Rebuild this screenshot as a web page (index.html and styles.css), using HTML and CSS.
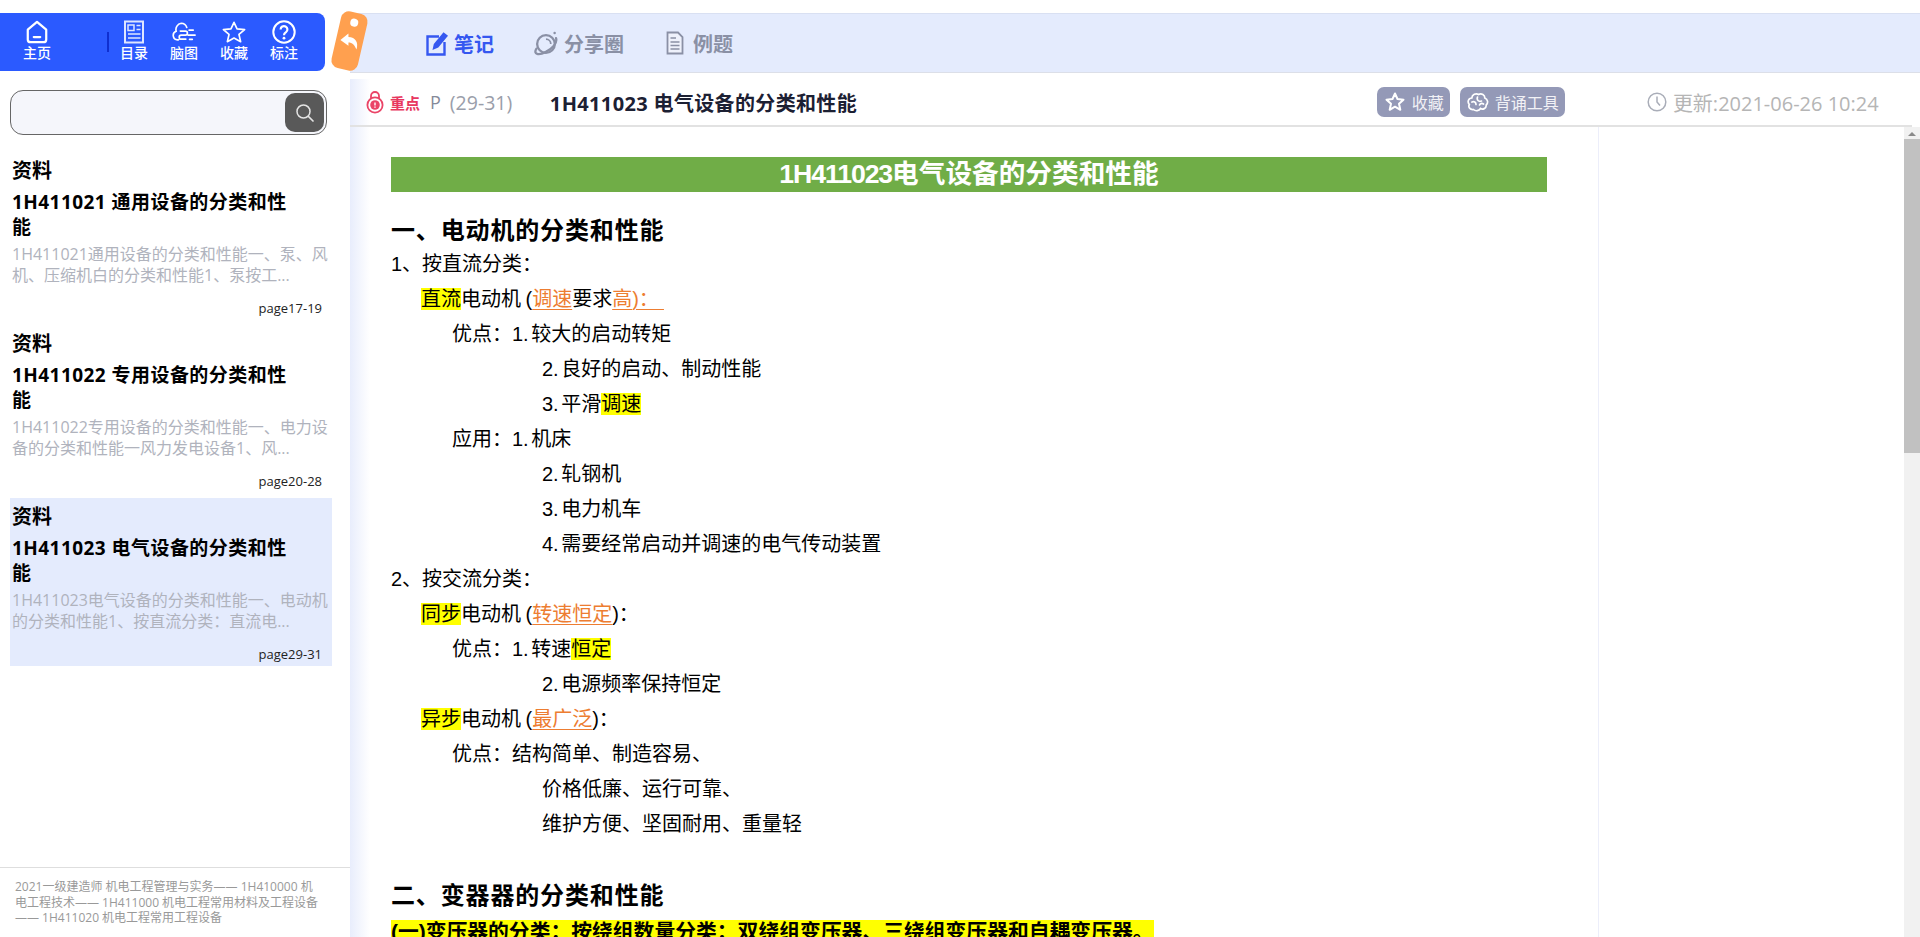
FILE: index.html
```html
<!DOCTYPE html>
<html lang="zh-CN">
<head>
<meta charset="utf-8">
<title>1H411023 电气设备的分类和性能</title>
<link rel="stylesheet" href="styles.css">
</head>
<body>
<div class="app">
  <aside class="side">
    <nav class="nav">
      <a class="nav-item nav-home">
        <svg viewBox="0 0 24 26" class="nav-icon"><path d="M12 2 L22 10.500 V21 a3 3 0 0 1-3 3 H5 a3 3 0 0 1-3-3 V10.500 Z M8.500 18.500 H15.500" fill="none" stroke="#fff" stroke-width="2.400" stroke-linejoin="round" stroke-linecap="round"/></svg>
        <span>主页</span>
      </a>
      <span class="nav-sep"></span>
      <a class="nav-item">
        <svg viewBox="0 0 22 24" class="nav-icon"><path d="M2 1.500 H20 V22.500 H2 Z" fill="none" stroke="#dfe6ff" stroke-width="2"/><path d="M5 5 H11 V10.500 H5 Z" fill="none" stroke="#dfe6ff" stroke-width="1.500"/><path d="M13.500 5.500 H17.500 M13.500 9.500 H17.500 M5 14 H17.500 M5 18 H17.500" stroke="#dfe6ff" stroke-width="1.600"/></svg>
        <span>目录</span>
      </a>
      <a class="nav-item">
        <svg viewBox="0 0 26 24" class="nav-icon"><path d="M7 20.500 H6 a4.800 4.800 0 0 1-1.500-9.300 A7 7 0 0 1 10 2.500 a6.500 6.500 0 0 1 6 4.500 M9 11 H14.500 a2.200 2.200 0 0 1 0 4.400 H10 a2.200 2.200 0 0 0 0 4.400 H15 M18.500 10 H23 M17.500 15.400 H25 M19 20 H22" fill="none" stroke="#fff" stroke-width="1.800" stroke-linecap="round"/></svg>
        <span>脑图</span>
      </a>
      <a class="nav-item">
        <svg viewBox="0 0 26 24" class="nav-icon"><path d="M13 1.500 L16.300 8.600 L24.500 9.400 L18.400 14.700 L20.200 22.500 L13 18.500 L5.800 22.500 L7.600 14.700 L1.500 9.400 L9.700 8.600 Z" fill="none" stroke="#fff" stroke-width="1.800" stroke-linejoin="round"/></svg>
        <span>收藏</span>
      </a>
      <a class="nav-item">
        <svg viewBox="0 0 24 24" class="nav-icon"><circle cx="12" cy="12" r="10.700" fill="none" stroke="#fff" stroke-width="2"/><path d="M8.600 9.400 a3.400 3.400 0 1 1 5.400 2.800 c-1.300 .9-2 1.500-2 3" fill="none" stroke="#fff" stroke-width="2.200"/><circle cx="12" cy="18.200" r="1.400" fill="#fff"/></svg>
        <span>标注</span>
      </a>
    </nav>
    <div class="tag">
      <span class="tag-hole"></span>
      <svg viewBox="0 0 20 18" class="tag-arrow"><path d="M9 0.500 L0.500 7.500 L9 13.500 V10 C13 10 15.500 12.500 17.500 17.500 C20 10 16.500 4.500 9 4.300 Z" fill="#fff"/></svg>
    </div>
    <div class="search">
      <span class="search-btn">
        <svg viewBox="0 0 20 20" class="search-icon"><circle cx="8.500" cy="8.500" r="6.500" fill="none" stroke="#e4e4e4" stroke-width="1.500"/><path d="M13.500 13.500 L18 18" stroke="#e4e4e4" stroke-width="1.700" stroke-linecap="round"/></svg>
      </span>
    </div>
    <ul class="list">
      <li class="entry">
        <div class="entry-kind">资料</div>
        <div class="entry-title">1H411021 通用设备的分类和性能</div>
        <div class="entry-desc">1H411021通用设备的分类和性能一、泵、风机、压缩机白的分类和性能1、泵按工...</div>
        <div class="entry-page">page17-19</div>
      </li>
      <li class="entry">
        <div class="entry-kind">资料</div>
        <div class="entry-title">1H411022 专用设备的分类和性能</div>
        <div class="entry-desc">1H411022专用设备的分类和性能一、电力设备的分类和性能一风力发电设备1、风...</div>
        <div class="entry-page">page20-28</div>
      </li>
      <li class="entry entry-on">
        <div class="entry-kind">资料</div>
        <div class="entry-title">1H411023 电气设备的分类和性能</div>
        <div class="entry-desc">1H411023电气设备的分类和性能一、电动机的分类和性能1、按直流分类：直流电...</div>
        <div class="entry-page">page29-31</div>
      </li>
    </ul>
    <footer class="crumb">2021一级建造师 机电工程管理与实务—— 1H410000 机电工程技术—— 1H411000 机电工程常用材料及工程设备—— 1H411020 机电工程常用工程设备</footer>
  </aside>

  <main class="main">
    <div class="tabs">
      <a class="tab tab-on">
        <svg viewBox="0 0 22 25" class="tab-icon tab-icon-note"><path d="M13 5.500 H1.500 V23.500 H18.500 V11" fill="none" stroke="#3557f0" stroke-width="2.400"/><path d="M6.500 19 L7.800 13 L17.500 1.200 L22 4.800 L12.300 16.500 Z" fill="#3557f0"/></svg>
        <span>笔记</span>
      </a>
      <a class="tab tab-share">
        <svg viewBox="0 0 26 26" class="tab-icon tab-icon-share"><circle cx="13.500" cy="13.500" r="9.200" fill="none" stroke="#8a90a5" stroke-width="2.400"/><path d="M13.500 8.500 a5 5 0 0 1 5 5" fill="none" stroke="#8a90a5" stroke-width="1.800"/><path d="M3.500 18.500 C0 24.500 6 25.500 13 22 C19.500 19 25.500 13 24 7.500" fill="none" stroke="#8a90a5" stroke-width="2.400" stroke-linecap="round"/><circle cx="22.500" cy="2" r="1.300" fill="#8a90a5"/></svg>
        <span>分享圈</span>
      </a>
      <a class="tab">
        <svg viewBox="0 0 18 24" class="tab-icon tab-icon-doc"><path d="M1.500 1.500 H12 L16.500 6 V22.500 H1.500 Z" fill="#eef1fb" stroke="#8a90a5" stroke-width="1.800"/><path d="M4.500 7 H10 M4.500 11 H13.500 M4.500 14.500 H13.500 M4.500 18 H13.500" stroke="#8a90a5" stroke-width="1.400"/></svg>
        <span>例题</span>
      </a>
    </div>
    <header class="head">
      <svg viewBox="0 0 18 24" class="head-lock"><path d="M5 9 V6 a4 4 0 0 1 8 0 V9" fill="none" stroke="#ea4467" stroke-width="1.800"/><circle cx="9" cy="15" r="7.600" fill="none" stroke="#ea4467" stroke-width="1.800"/><circle cx="9" cy="15" r="4.800" fill="#ea4467"/><path d="M9 12.500 V15.500 M9 16.600 V17.800" stroke="#fff" stroke-width="1.400"/></svg>
      <span class="head-key">重点</span>
      <span class="head-page">P</span>
      <span class="head-range">(29-31)</span>
      <span class="head-title">1H411023 电气设备的分类和性能</span>
      <a class="pill">
        <svg viewBox="0 0 20 20" class="pill-icon"><path d="M10 1.500 L12.500 7 L18.500 7.700 L14 11.700 L15.300 17.800 L10 14.700 L4.700 17.800 L6 11.700 L1.500 7.700 L7.500 7 Z" fill="none" stroke="#fff" stroke-width="2" stroke-linejoin="round"/></svg>
        <span>收藏</span>
      </a>
      <a class="pill">
        <svg viewBox="0 0 22 20" class="pill-icon"><path d="M6.500 17.500 C3 18 1 15 2.300 12.500 C0 10 1.500 6 4.800 6 C5 2.500 9 0.800 11.500 2.500 C14.500 0.800 18 3 17.800 6 C20.800 7 21.500 11 19.200 13 C19.500 16.500 15.500 18 13.500 16.500 C12 19 8.500 19.500 6.500 17.500 Z M5 10 C7 9 9 10 9 12.500 M10.500 5 C9.500 8 11.500 10 14.500 9 M12.500 13 C13 11.500 15 11 16.500 12" fill="none" stroke="#fff" stroke-width="1.700" stroke-linecap="round"/></svg>
        <span>背诵工具</span>
      </a>
      <span class="head-time">
        <svg viewBox="0 0 20 20" class="time-icon"><circle cx="10" cy="10" r="8.800" fill="none" stroke="#a9adb8" stroke-width="1.500"/><path d="M10 4.500 V10 L13 13.500" fill="none" stroke="#a9adb8" stroke-width="1.500"/></svg>
        <span>更新:2021-06-26 10:24</span>
      </span>
    </header>
    <div class="body">
      <article class="doc">
        <h1 class="doc-banner"><span class="banner-code">1H411023</span>电气设备的分类和性能</h1>
        <h2 class="doc-h2">一、电动机的分类和性能</h2>
        <p class="line">1、按直流分类：</p>
        <p class="line ind1"><mark>直流</mark>电动机<span class="par">(</span><u class="org">调速</u>要求<u class="org">高)：&nbsp;&nbsp;</u></p>
        <p class="line ind2">优点：1. 较大的启动转矩</p>
        <p class="line ind3">2. 良好的启动、制动性能</p>
        <p class="line ind3">3. 平滑<mark>调速</mark></p>
        <p class="line ind2">应用：1. 机床</p>
        <p class="line ind3">2. 轧钢机</p>
        <p class="line ind3">3. 电力机车</p>
        <p class="line ind3">4. 需要经常启动并调速的电气传动装置</p>
        <p class="line">2、按交流分类：</p>
        <p class="line ind1"><mark>同步</mark>电动机<span class="par">(</span><u class="org">转速恒定</u>)：</p>
        <p class="line ind2">优点：1. 转速<mark>恒定</mark></p>
        <p class="line ind3">2. 电源频率保持恒定</p>
        <p class="line ind1"><mark>异步</mark>电动机<span class="par">(</span><u class="org">最广泛</u>)：</p>
        <p class="line ind2">优点：结构简单、制造容易、</p>
        <p class="line ind3">价格低廉、运行可靠、</p>
        <p class="line ind3">维护方便、坚固耐用、重量轻</p>
        <h2 class="doc-h2 doc-h2-b">二、变器器的分类和性能</h2>
        <p class="line line-b"><mark>(一)变压器的分类：按绕组数量分类：双绕组变压器、三绕组变压器和自耦变压器。</mark></p>
      </article>
      <div class="margin"></div>
      <div class="scroll">
        <span class="scroll-up"></span>
        <span class="scroll-thumb"></span>
      </div>
    </div>
  </main>
</div>
</body>
</html>
```
FILE: styles.css
```css
* { box-sizing: border-box; }
html, body { margin: 0; padding: 0; height: 100%; overflow: hidden; background: #fff; }
body { font-family: "Open Sans", "Noto Sans CJK SC", sans-serif; color: #000; }
a { color: inherit; text-decoration: none; }
ul { list-style: none; margin: 0; padding: 0; }
p, h1, h2 { margin: 0; }

.app { display: flex; height: 937px; }

/* Sidebar */
.side { position: relative; flex: 0 0 350px; width: 350px; padding-top: 13px; display: flex; flex-direction: column; }
.nav { width: 325px; height: 58px; background: #2b5aff; border-radius: 0 8px 8px 0; display: flex; align-items: flex-start; color: #fff; padding-top: 7px; }
.nav-item { width: 50px; display: flex; flex-direction: column; align-items: center; font-size: 14px; line-height: 18px; font-weight: 500; }
.nav-home { width: 74px; }
.nav-icon { width: 24px; height: 24px; display: block; }
.nav-sep { width: 2px; height: 20px; background: #0f2fd0; margin: 12px 0 0 33px; }
.tag { position: absolute; left: 336px; top: 12px; width: 27px; height: 58px; background: #ffa04f; border-radius: 8px; transform: rotate(13deg); display: flex; flex-direction: column; align-items: center; padding-top: 6px; }
.tag-hole { width: 8px; height: 8px; border-radius: 50%; background: #fff; }
.tag-arrow { width: 19px; height: 17px; margin-top: 7px; transform: rotate(-13deg); }
.search { margin: 19px 23px 0 10px; height: 45px; background: #f5f6fb; border: 1px solid #666; border-radius: 13px; display: flex; justify-content: flex-end; padding: 2px 2px 2px 0; }
.search-btn { width: 39px; height: 39px; background: #595959; border-radius: 10px; display: flex; align-items: center; justify-content: center; }
.search-icon { width: 20px; height: 20px; }
.list { padding: 17px 18px 0 10px; flex: 1; }
.entry { height: 168px; margin-bottom: 5px; padding: 4px 2px 0 2px; }
.entry-on { background: #e4ebfd; }
.entry-kind { font-size: 20px; font-weight: 700; line-height: 30px; }
.entry-title { font-size: 19px; letter-spacing: .45px; font-weight: 700; line-height: 25px; width: 285px; margin-top: 4px; }
.entry-desc { font-size: 16px; line-height: 21px; color: #b0b3bd; margin-top: 4px; width: 320px; }
.entry-page { font-size: 13px; line-height: 16px; color: #222; text-align: right; padding-right: 8px; margin-top: 14px; }
.crumb { height: 70px; border-top: 1px solid #dedede; padding: 11px 27px 0 15px; font-size: 12px; line-height: 15.500px; color: #999; }

/* Main */
.main { flex: 1; padding-top: 13px; display: flex; flex-direction: column; min-width: 0; }
.tabs { height: 60px; background: #e4ebfd; border-top: 1px solid #d9e0f2; border-bottom: 1px solid #dcdfe8; display: flex; align-items: center; padding-left: 76px; }
.tab { display: flex; align-items: center; font-size: 20px; font-weight: 700; color: #8a90a5; margin-right: 39px; }
.tab-on { color: #3557f0; }
.tab-share { margin-right: 42px; }
.tab-icon { height: 25px; margin-right: 6px; }
.tab-icon-note { width: 22px; }
.tab-icon-share { width: 25px; }
.tab-icon-doc { width: 18px; height: 24px; margin-right: 9px; }
.head { margin-top: 6px; height: 48px; background: linear-gradient(to right, #e8edfc, #fff 20px); border-bottom: 2px solid #e2e2e2; display: flex; align-items: center; padding-left: 16px; margin-right: 8px; }
.head-lock { width: 18px; height: 24px; }
.head-key { font-size: 15px; font-weight: 700; color: #e8375f; margin-left: 6px; }
.head-page { font-size: 18px; color: #858a99; margin-left: 10px; }
.head-range { font-size: 19.500px; color: #9a9eaa; margin-left: 9px; width: 100px; }
.head-title { font-size: 20px; letter-spacing: .35px; font-weight: 700; color: #1c2033; width: 827px; }
.pill { height: 30px; padding: 0 6px 0 7px; background: #9499b7; color: #f2f2f6; border-radius: 7px; display: flex; align-items: center; font-size: 16px; margin-right: 10px; }
.pill-icon { width: 22px; height: 20px; margin-right: 6px; }
.head-time { display: flex; align-items: center; font-size: 20px; color: #b5b5b5; margin-left: 72px; white-space: nowrap; }
.time-icon { width: 20px; height: 20px; margin-right: 6px; }
.body { flex: 1; display: flex; min-height: 0; overflow: hidden; background: linear-gradient(to right, #e8edfc, #fff 20px); }
.doc { width: 1248px; flex: none; padding: 30px 51px 0 41px; overflow: hidden; font-family: "Liberation Sans", "Noto Sans CJK SC", sans-serif; }
.doc-banner { height: 35px; background: #70ad47; color: #fff; font-size: 26.670px; line-height: 35px; font-weight: 700; text-align: center; }
.banner-code { letter-spacing: -1.100px; }
.doc-h2 { font-size: 24px; line-height: 33px; font-weight: 700; letter-spacing: .85px; margin-top: 22px; }
.doc-h2-b { margin-top: 37px; }
.line { font-size: 20px; line-height: 35px; height: 35px; white-space: nowrap; word-spacing: -3px; }
.line-b { font-size: 20.800px; line-height: 28px; font-weight: 700; margin-top: 6px; }
.ind1 { padding-left: 30px; }
.ind2 { padding-left: 61px; }
.ind3 { padding-left: 151px; }
mark { background: #ffff00; color: #000; }
.org { color: #ed7d31; text-decoration-thickness: 1px; text-underline-offset: 3px; }
.par { padding-left: 4.500px; }
.margin { width: 306px; flex: none; border-left: 1px solid #eceefa; }
.scroll { flex: none; width: 16px; margin-left: auto; background: #f1f1f1; display: flex; flex-direction: column; align-items: center; }
.scroll-up { margin-top: 5px; width: 0; height: 0; border: 4px solid transparent; border-top: 0; border-bottom: 4px solid #8a8a8a; }
.scroll-thumb { margin-top: 3px; width: 100%; height: 314px; background: #c1c1c1; }
```
